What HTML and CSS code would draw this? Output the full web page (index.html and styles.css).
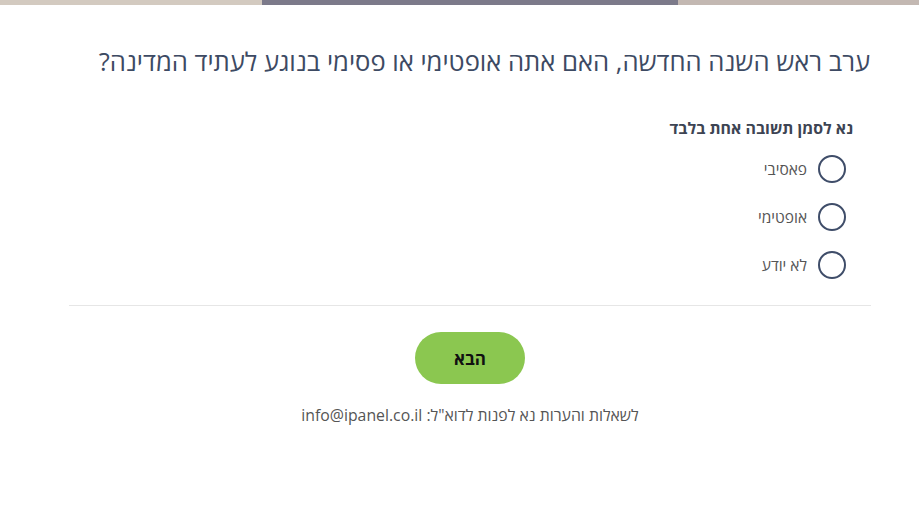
FILE: index.html
```html
<!DOCTYPE html>
<html lang="he" dir="rtl">
<head>
<meta charset="utf-8">
<link rel="stylesheet" href="styles.css">
</head>
<body>
<div class="progress">
  <div class="seg seg-a"></div>
  <div class="seg seg-b"></div>
  <div class="seg seg-c"></div>
</div>
<main class="survey">
  <h1 class="question">ערב ראש השנה החדשה, האם אתה אופטימי או פסימי בנוגע לעתיד המדינה?</h1>
  <div class="answers">
    <p class="instruction">נא לסמן תשובה אחת בלבד</p>
    <label class="option"><span class="radio"></span><span class="opt-text">פאסיבי</span></label>
    <label class="option"><span class="radio"></span><span class="opt-text">אופטימי</span></label>
    <label class="option"><span class="radio"></span><span class="opt-text">לא יודע</span></label>
  </div>
  <hr class="divider">
  <div class="actions">
    <button class="next">הבא</button>
  </div>
  <p class="footer">לשאלות והערות נא לפנות לדוא"ל: <span class="email">info@ipanel.co.il</span></p>
</main>
</body>
</html>
```

FILE: styles.css
```css
html, body {
  margin: 0;
  padding: 0;
  background: #fff;
}
body {
  font-family: "Open Sans", "Noto Sans", "DejaVu Sans", sans-serif;
  color: #555;
}
.progress {
  display: flex;
  height: 5px;
  direction: ltr;
}
.seg-a { width: 262px; background: #d3cac0; }
.seg-b { width: 416px; background: #7c7a8a; }
.seg-c { flex: 1; background: #c3b8b2; }

.survey {
  margin: 0 48px 0 69px;
}
.question {
  margin: 39px 0 0 0;
  font-size: 25.6px;
  font-weight: 400;
  color: #3d4a63;
  line-height: 36px;
  padding-right: 1px;
}
.answers {
  padding-right: 18px;
  margin-top: 37px;
}
.instruction {
  margin: 0 0 6px 0;
  font-size: 15.9px;
  font-weight: 700;
  color: #3d4453;
  line-height: 22px;
}
.option {
  display: flex;
  align-items: center;
  height: 48px;
  gap: 11px;
  font-size: 15.5px;
  color: #555;
}
.radio {
  width: 24px;
  height: 24px;
  border: 2px solid #3f4d69;
  border-radius: 50%;
  box-sizing: content-box;
  margin-right: 7px;
}
.divider {
  margin: 16px 0 0 0;
  border: 0;
  border-top: 1px solid #e6e6e6;
}
.actions {
  display: flex;
  justify-content: center;
  margin-top: 26px;
}
.next {
  width: 110px;
  height: 52px;
  border: 0;
  border-radius: 26px;
  background: #8bc750;
  color: #111;
  font-family: inherit;
  font-size: 17px;
  font-weight: 700;
}
.footer {
  text-align: center;
  margin: 20px 0 0 0;
  font-size: 15.8px;
  line-height: 22px;
  color: #555;
}
.email {
  color: #555;
}
```
